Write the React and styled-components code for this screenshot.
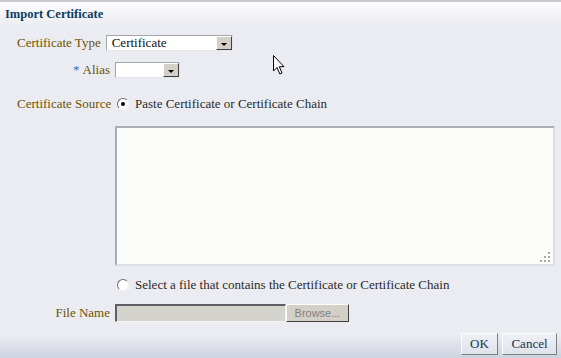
import React from "react";
import styled, { createGlobalStyle } from "styled-components";

const Global = createGlobalStyle`
  html, body {
    margin: 0;
    padding: 0;
    background: #ebecf1;
  }
`;

const Page = styled.div`
  position: relative;
  width: 561px;
  height: 358px;
  overflow: hidden;
  background: #ebecf1;
  font-family: "Liberation Serif", "Times New Roman", serif;
  font-size: 13px;
  color: #2a2a2a;
  display: flex;
  flex-direction: column;
`;

const Header = styled.div`
  height: 24px;
  border-top: 2px solid #c6c9d0;
  background: linear-gradient(#fdfdfe, #ebecf1);
  display: flex;
  align-items: center;
  padding-left: 5px;
`;

const Title = styled.h1`
  margin: 0;
  font-size: 12.5px;
  font-weight: bold;
  color: #0b3c5d;
`;

const Form = styled.div`
  flex: 1;
  padding: 8px 0 0 17px;
  display: flex;
  flex-direction: column;
`;

const Row = styled.div`
  display: flex;
  align-items: center;
  gap: 5px;
  height: ${(p) => p.$h || 18}px;
  margin-top: ${(p) => p.$mt || 0}px;
`;

const Label = styled.label`
  width: ${(p) => (p.$auto ? "auto" : "93px")};
  text-align: right;
  color: #6c5200;
  white-space: nowrap;
`;

const Star = styled.span`
  color: #3a6fb0;
  margin-right: 3px;
`;

const Select = styled.div`
  width: ${(p) => p.$w}px;
  height: 16px;
  box-sizing: border-box;
  background: #fff;
  border: 1px solid;
  border-color: #a4a6ab #e4e5ea #e4e5ea #a4a6ab;
  display: flex;
  align-items: center;
  justify-content: space-between;
  padding-left: 5px;
  color: #111;
`;

const DropButton = styled.span`
  width: 16px;
  height: 14px;
  box-sizing: border-box;
  background: #d4d0c8;
  border: 1px solid;
  border-color: #fff #404040 #404040 #fff;
  display: flex;
  align-items: center;
  justify-content: center;
  &::after {
    content: "";
    border-left: 3px solid transparent;
    border-right: 3px solid transparent;
    border-top: 3px solid #000;
    margin-top: 2px;
  }
`;

const Radio = styled.span`
  width: 12px;
  height: 12px;
  box-sizing: border-box;
  border-radius: 50%;
  border: 1px solid;
  border-color: #6f6f6f #f4f4f4 #f4f4f4 #6f6f6f;
  background: #fff;
  margin-left: 2px;
  margin-right: 1px;
  display: flex;
  align-items: center;
  justify-content: center;
  &::after {
    content: "";
    width: 4px;
    height: 4px;
    border-radius: 50%;
    background: ${(p) => (p.$checked ? "#000" : "transparent")};
  }
`;

const Option = styled.span`
  color: #2a2a2a;
`;

const AreaWrap = styled.div`
  position: relative;
  margin-left: 98px;
  margin-top: 13px;
  width: 440px;
  height: 140px;
`;

const Area = styled.textarea`
  width: 100%;
  height: 100%;
  box-sizing: border-box;
  margin: 0;
  resize: none;
  background: #fcfdfb;
  border: 2px solid;
  border-color: #a9afb9 #dcdee3 #dcdee3 #a9afb9;
  outline: none;
`;

const Grip = styled.svg`
  position: absolute;
  right: 4px;
  bottom: 3px;
`;

const FileInput = styled.div`
  width: 171px;
  height: 18px;
  box-sizing: border-box;
  background: #d4d3ce;
  border-style: solid;
  border-width: 2px 1px 1px 2px;
  border-color: #5f5f68 #f2f2f2 #f2f2f2 #5f5f68;
`;

const Browse = styled.span`
  width: 63px;
  height: 18px;
  box-sizing: border-box;
  margin-left: -5px;
  background: #d4d0c8;
  border: 1px solid;
  border-color: #fff #404040 #404040 #fff;
  color: #808080;
  font-family: "Liberation Sans", Arial, sans-serif;
  font-size: 11px;
  display: flex;
  align-items: center;
  justify-content: center;
`;

const Footer = styled.div`
  height: 25px;
  padding-top: 2px;
  background: linear-gradient(#ebecf1, #ebecf1 15%, #cdd3df);
  display: flex;
  justify-content: flex-end;
  align-items: flex-start;
  gap: 4px;
  padding-right: 4px;
`;

const Button = styled.button`
  height: 22px;
  min-width: ${(p) => p.$w}px;
  box-sizing: border-box;
  background: linear-gradient(#eef0f5, #dfe3ea);
  border: 1px solid;
  border-color: #fdfdfd #7d7f85 #7d7f85 #fdfdfd;
  font-family: "Liberation Serif", "Times New Roman", serif;
  font-size: 13px;
  color: #16324d;
  padding: 0 6px;
  cursor: pointer;
`;

const Pointer = styled.svg`
  position: absolute;
  left: 273px;
  top: 55px;
`;

export default function App() {
  return (
    <Page>
      <Global />
      <Header>
        <Title>Import Certificate</Title>
      </Header>
      <Form>
        <Row>
          <Label $auto>Certificate Type</Label>
          <Select $w={127}>
            Certificate
            <DropButton />
          </Select>
        </Row>
        <Row $mt={9}>
          <Label>
            <Star>*</Star>Alias
          </Label>
          <Select $w={65}>
            <span />
            <DropButton />
          </Select>
        </Row>
        <Row $mt={16}>
          <Label>Certificate Source</Label>
          <Radio $checked />
          <Option>Paste Certificate or Certificate Chain</Option>
        </Row>
        <AreaWrap>
          <Area />
          <Grip width="11" height="11" viewBox="0 0 11 11">
            <g fill="#a8a8a8">
              <rect x="8" y="0" width="2" height="2" />
              <rect x="4" y="4" width="2" height="2" />
              <rect x="8" y="4" width="2" height="2" />
              <rect x="0" y="8" width="2" height="2" />
              <rect x="4" y="8" width="2" height="2" />
              <rect x="8" y="8" width="2" height="2" />
            </g>
          </Grip>
        </AreaWrap>
        <Row $mt={10}>
          <Label />
          <Radio />
          <Option>Select a file that contains the Certificate or Certificate Chain</Option>
        </Row>
        <Row $mt={10}>
          <Label>File Name</Label>
          <FileInput />
          <Browse>Browse...</Browse>
        </Row>
      </Form>
      <Footer>
        <Button $w={37}>OK</Button>
        <Button $w={55}>Cancel</Button>
      </Footer>
      <Pointer width="13" height="21" viewBox="0 0 13 21">
        <path
          d="M0.5 0.5 L0.5 16 L4 12.5 L6.8 19 L9 18 L6.3 11.7 L11 11.7 Z"
          fill="#fff"
          stroke="#000"
          strokeWidth="1"
          strokeLinejoin="miter"
        />
      </Pointer>
    </Page>
  );
}
